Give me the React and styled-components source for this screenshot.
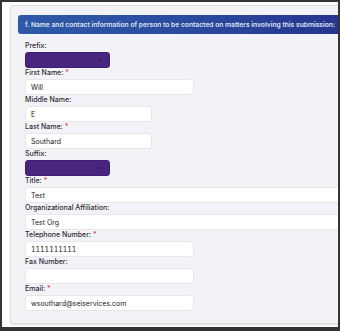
import React from "react";
import styled, { createGlobalStyle } from "styled-components";

const Global = createGlobalStyle`
  html, body { margin: 0; padding: 0; background: #ffffff; }
  body { font-family: "Inter", "Open Sans", sans-serif; }
  * { box-sizing: border-box; }
`;

const Frame = styled.div`
  width: 340px;
  height: 331px;
  border: 2px solid #353535;
  border-bottom-width: 4px;
  background: #ffffff;
  overflow: hidden;
  padding: 3px 0 0 8px;
`;

const Card = styled.div`
  width: 360px;
  height: 319px;
  background: #f3f2f7;
  border: 1px solid #dcdce0;
  border-radius: 3px;
  box-shadow: 0 1px 2px rgba(0,0,0,0.12);
  padding: 9px 0 0 7px;
`;

const Header = styled.div`
  height: 19px;
  border-radius: 3px 0 0 3px;
  background: linear-gradient(90deg, #2d5aa8 0%, #2a4a9e 50%, #25308b 100%);
  color: #dfe3f2;
  font-size: 6.7px;
  font-weight: 600;
  display: flex;
  align-items: center;
  padding-left: 7px;
  white-space: nowrap;
`;

const Fields = styled.div`
  display: flex;
  flex-direction: column;
  padding: 7px 0 0 7px;
`;

const Field = styled.div`
  display: flex;
  flex-direction: column;
`;

const Label = styled.div`
  font-size: 7px;
  line-height: 10px;
  height: 11px;
  color: #2e2e33;
  font-weight: 500;
`;

const Req = styled.span`
  color: #d9453f;
  margin-left: 2px;
`;

const Input = styled.div`
  width: ${p => p.$w}px;
  height: 16px;
  background: #ffffff;
  border: 1px solid #e6e6ec;
  border-radius: 3px;
  font-size: 7px;
  font-variant-numeric: tabular-nums;
  color: #222;
  display: flex;
  align-items: center;
  padding-left: 5px;
`;

const Select = styled.div`
  width: 85px;
  height: 16px;
  background: #4a2580;
  border: 1px solid #3f1f70;
  border-radius: 3px;
  display: flex;
  align-items: center;
  justify-content: flex-end;
  padding-right: 6px;
`;

const Chevron = () => (
  <svg width="5" height="4" viewBox="0 0 5 4">
    <path d="M0.8 1 L2.5 2.8 L4.2 1" fill="none" stroke="#2a1350" strokeWidth="0.9" />
  </svg>
);

const fields = [
  { label: "Prefix:", type: "select" },
  { label: "First Name:", req: true, value: "Will", w: 169 },
  { label: "Middle Name:", value: "E", w: 127 },
  { label: "Last Name:", req: true, value: "Southard", w: 127 },
  { label: "Suffix:", type: "select" },
  { label: "Title:", req: true, value: "Test", w: 330 },
  { label: "Organizational Affiliation:", value: "Test Org", w: 330 },
  { label: "Telephone Number:", req: true, value: "1111111111", w: 169 },
  { label: "Fax Number:", value: "", w: 169 },
  { label: "Email:", req: true, value: "wsouthard@seiservices.com", w: 169 },
];

export default function App() {
  return (
    <>
      <Global />
      <Frame>
        <Card>
          <Header>f. Name and contact information of person to be contacted on matters involving this submission:</Header>
          <Fields>
            {fields.map((f) => (
              <Field key={f.label}>
                <Label>
                  {f.label}
                  {f.req && <Req>*</Req>}
                </Label>
                {f.type === "select" ? (
                  <Select><Chevron /></Select>
                ) : (
                  <Input $w={f.w}>{f.value}</Input>
                )}
              </Field>
            ))}
          </Fields>
        </Card>
      </Frame>
    </>
  );
}
